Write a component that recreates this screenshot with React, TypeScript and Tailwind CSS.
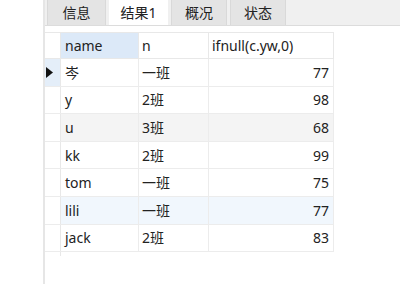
import React from "react";

const rows = [
  { name: "岑", n: "一班", v: 77, bg: "bg-white" },
  { name: "y", n: "2班", v: 98, bg: "bg-white" },
  { name: "u", n: "3班", v: 68, bg: "bg-[#f4f4f4]" },
  { name: "kk", n: "2班", v: 99, bg: "bg-white" },
  { name: "tom", n: "一班", v: 75, bg: "bg-white" },
  { name: "lili", n: "一班", v: 77, bg: "bg-[#f1f7fd]" },
  { name: "jack", n: "2班", v: 83, bg: "bg-white" },
];

const tabs = [
  { label: "信息", w: "w-[59px]", active: false },
  { label: "结果1", w: "w-[59px]", active: true },
  { label: "概况", w: "w-[56px]", active: false },
  { label: "状态", w: "w-[56px]", active: false },
];

export default function App() {
  return (
    <div
      className="w-[400px] h-[284px] flex bg-white text-[14px] text-[#222] overflow-hidden"
      style={{ fontFamily: '"Noto Sans", "Noto Sans CJK SC", sans-serif' }}
    >
      <div className="w-[45px] h-full bg-white border-r-2 border-[#e6e6e6]" />
      <div className="flex-1 flex flex-col">
        <div className="h-[26px] bg-[#f0f0f0] flex items-end pl-[2px] gap-[3px] border-b border-[#dcdcdc]">
          {tabs.map((t) => (
            <div
              key={t.label}
              className={`${t.w} h-[26px] flex items-center justify-center ${
                t.active ? "bg-white" : "bg-[#e4e4e4] border-x border-[#d9d9d9]"
              }`}
            >
              {t.label}
            </div>
          ))}
        </div>
        <div className="flex-1 pt-[6px] flex">
          <div className="flex flex-col">
            <div className="flex h-[27px] border-y border-[#e8e8e8]">
              <div className="w-[16px] border-r border-[#e8e8e8]" />
              <div className="w-[78px] bg-[#dce9f8] border-r border-[#e8e8e8] flex items-center pl-[4px]">name</div>
              <div className="w-[70px] border-r border-[#e8e8e8] flex items-center pl-[3px]">n</div>
              <div className="w-[125px] border-r border-[#e8e8e8] flex items-center pl-[3px]">ifnull(c.yw,0)</div>
            </div>
            {rows.map((r, i) => (
              <div key={i} className={`flex h-[27.6px] border-b border-[#ececec] ${r.bg}`}>
                <div
                  className={`w-[16px] border-r border-[#e8e8e8] flex items-center pl-[1px] ${
                    i === 0 ? "bg-[#e4eef9]" : "bg-white"
                  }`}
                >
                  {i === 0 && (
                    <svg width="7" height="11" viewBox="0 0 7 11">
                      <path d="M0 0 L7 5.5 L0 11 Z" fill="#111" />
                    </svg>
                  )}
                </div>
                <div className="w-[78px] border-r border-[#ececec] flex items-center pl-[4px]">{r.name}</div>
                <div className="w-[70px] border-r border-[#ececec] flex items-center pl-[3px]">{r.n}</div>
                <div className="w-[125px] border-r border-[#ececec] flex items-center justify-end pr-[4px]">{r.v}</div>
              </div>
            ))}
            <div className="w-[16px] h-[4px] border-r border-[#e8e8e8]" />
          </div>
        </div>
      </div>
    </div>
  );
}
